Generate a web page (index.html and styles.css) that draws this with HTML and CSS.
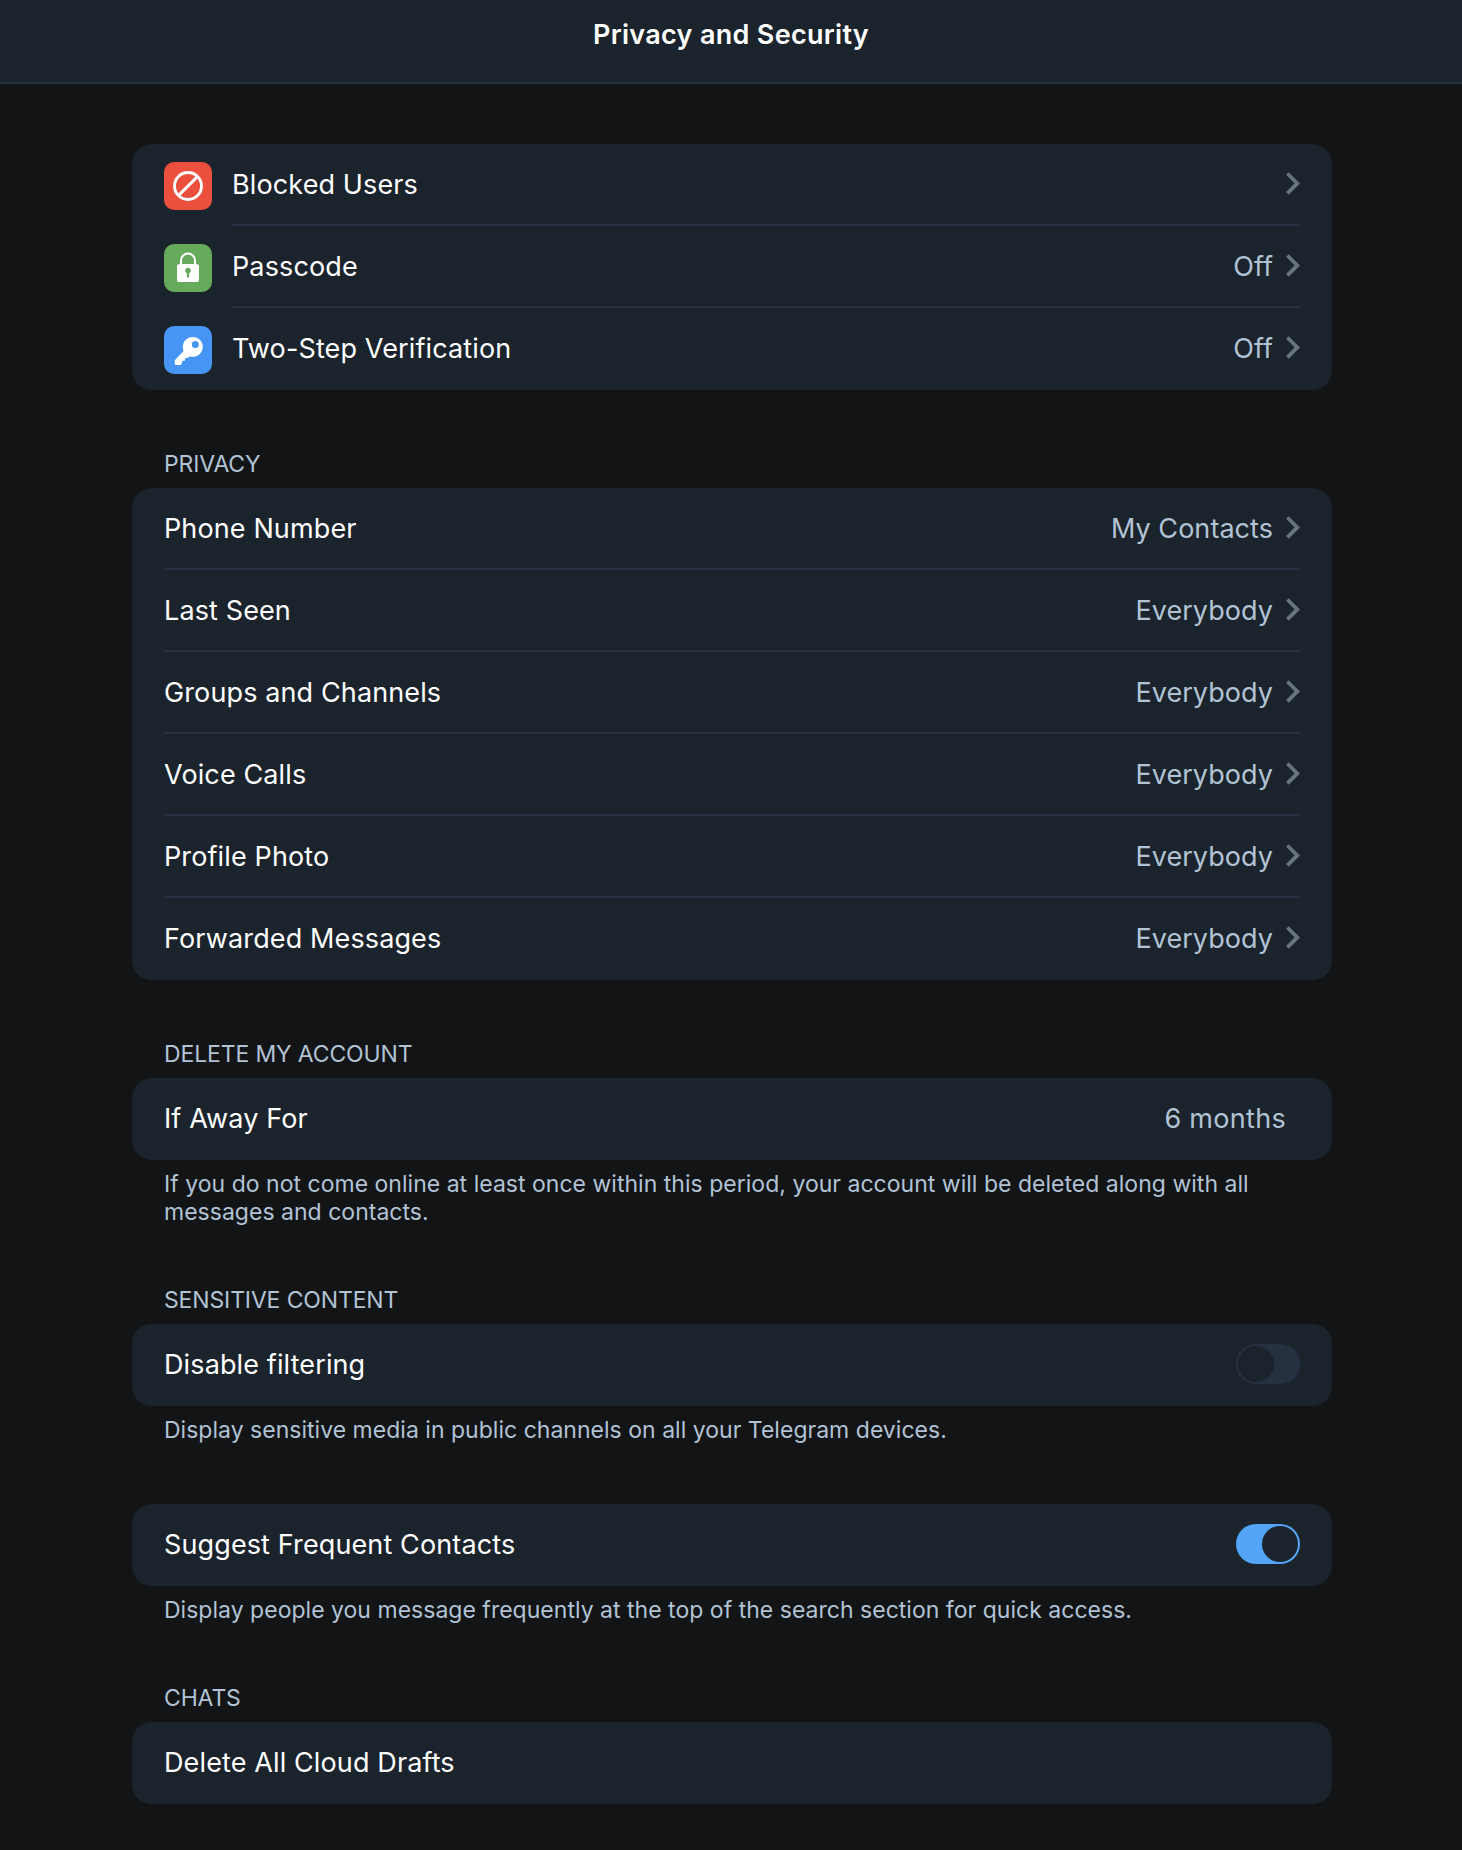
FILE: index.html
```html
<!DOCTYPE html>
<html lang="en">
<head>
<meta charset="utf-8">
<title>Privacy and Security</title>
<link rel="stylesheet" href="styles.css">
</head>
<body>
<svg class="sprite" aria-hidden="true">
  <symbol id="chevron" viewBox="0 0 14 24"><path d="M1.4 1.5 11.3 11.4 1.4 21.3" fill="none" stroke="currentColor" stroke-width="3.8"/></symbol>
</svg>
<header class="header"><h1 class="title">Privacy and Security</h1></header>
<main class="content">
  <section class="section">
    <div class="card">
      <div class="row row-icon">
        <svg class="icon icon-red" viewBox="0 0 48 48"><g fill="none" stroke="#fff" stroke-width="2.9"><circle cx="24" cy="24" r="13.5"/><path d="M14.6 33.4 33.4 14.6"/></g></svg>
        <div class="cell"><span class="name">Blocked Users</span><svg class="chevron"><use href="#chevron"/></svg></div>
      </div>
      <div class="row row-icon">
        <svg class="icon icon-green" viewBox="0 0 48 48"><path d="M17 21v-4.5a7 7 0 0 1 14 0V21" fill="none" stroke="#fff" stroke-width="2"/><rect x="13" y="20" width="22" height="18" rx="2.6" fill="#fff"/><path d="M24 23.8a2.8 2.8 0 0 1 1.1 5.4V33.6h-2.2V29.2A2.8 2.8 0 0 1 24 23.8z" fill="#66ab5c"/></svg>
        <div class="cell"><span class="name">Passcode</span><span class="value">Off</span><svg class="chevron"><use href="#chevron"/></svg></div>
      </div>
      <div class="row row-icon">
        <svg class="icon icon-blue" viewBox="0 0 48 48"><path fill="#fff" fill-rule="evenodd" d="M29 11a9.9 9.9 0 1 1-2.9 19.4L23.6 31.8 21 32.2v2.6h-2.6l-.4 2-1 2.2h-5a1.2 1.2 0 0 1-1.2-1.2v-3.6L19.6 25A9.9 9.9 0 0 1 29 11zm2.3 3.9a3.5 3.5 0 1 0 0 7 3.5 3.5 0 0 0 0-7z"/></svg>
        <div class="cell"><span class="name">Two-Step Verification</span><span class="value">Off</span><svg class="chevron"><use href="#chevron"/></svg></div>
      </div>
    </div>
  </section>

  <section class="section">
    <h2 class="label">PRIVACY</h2>
    <div class="card">
      <div class="row"><div class="cell"><span class="name">Phone Number</span><span class="value">My Contacts</span><svg class="chevron"><use href="#chevron"/></svg></div></div>
      <div class="row"><div class="cell"><span class="name">Last Seen</span><span class="value">Everybody</span><svg class="chevron"><use href="#chevron"/></svg></div></div>
      <div class="row"><div class="cell"><span class="name">Groups and Channels</span><span class="value">Everybody</span><svg class="chevron"><use href="#chevron"/></svg></div></div>
      <div class="row"><div class="cell"><span class="name">Voice Calls</span><span class="value">Everybody</span><svg class="chevron"><use href="#chevron"/></svg></div></div>
      <div class="row"><div class="cell"><span class="name">Profile Photo</span><span class="value">Everybody</span><svg class="chevron"><use href="#chevron"/></svg></div></div>
      <div class="row"><div class="cell"><span class="name">Forwarded Messages</span><span class="value">Everybody</span><svg class="chevron"><use href="#chevron"/></svg></div></div>
    </div>
  </section>

  <section class="section">
    <h2 class="label">DELETE MY ACCOUNT</h2>
    <div class="card">
      <div class="row"><div class="cell"><span class="name">If Away For</span><span class="value value-plain">6 months</span></div></div>
    </div>
    <p class="note">If you do not come online at least once within this period, your account will be deleted along with all messages and contacts.</p>
  </section>

  <section class="section">
    <h2 class="label">SENSITIVE CONTENT</h2>
    <div class="card">
      <div class="row"><div class="cell"><span class="name">Disable filtering</span><span class="switch"><span class="knob"></span></span></div></div>
    </div>
    <p class="note">Display sensitive media in public channels on all your Telegram devices.</p>
  </section>

  <section class="section">
    <div class="card">
      <div class="row"><div class="cell"><span class="name">Suggest Frequent Contacts</span><span class="switch switch-on"><span class="knob"></span></span></div></div>
    </div>
    <p class="note">Display people you message frequently at the top of the search section for quick access.</p>
  </section>

  <section class="section">
    <h2 class="label">CHATS</h2>
    <div class="card">
      <div class="row"><div class="cell"><span class="name">Delete All Cloud Drafts</span></div></div>
    </div>
  </section>
</main>
</body>
</html>
```
FILE: styles.css
```css
* { box-sizing: border-box; }

body {
  margin: 0;
  min-height: 1850px;
  background: #131415;
  color: #fff;
  font-family: Inter, "Liberation Sans", sans-serif;
  font-size: 27px;
  letter-spacing: 0.12px;
}

.sprite { display: none; }

.header {
  height: 84px;
  padding-top: 15px;
  background: #1b232c;
  border-bottom: 2px solid #253141;
  text-align: center;
}

.title {
  margin: 0;
  font-size: 27px;
  font-weight: 600;
  line-height: 40px;
  letter-spacing: 0.3px;
}

.content {
  display: flex;
  flex-direction: column;
  gap: 60px;
  width: 1200px;
  margin: 60px 130px 0 132px;
}

.card {
  background: #1b232c;
  border-radius: 20px;
}

.row {
  display: flex;
  height: 82px;
  padding: 0 32px;
}

.cell {
  display: flex;
  flex: 1;
  align-items: center;
  border-bottom: 2px solid #253141;
}

.row:last-child .cell { border-bottom-color: transparent; }

.name { flex: 1; }

.value {
  margin-right: 13px;
  color: #b1c3d5;
  letter-spacing: 0.05px;
}

.value-plain {
  margin-right: 14px;
  letter-spacing: 0.3px;
}

.chevron {
  width: 14px;
  height: 24px;
  color: #687481;
}

.icon {
  width: 48px;
  height: 48px;
  margin: 18px 20px 0 0;
  border-radius: 10px;
}

.icon-red { background: #eb4f3d; }
.icon-green { background: #66ab5c; }
.icon-blue { background: #4694f3; }

.label,
.note {
  margin: 0;
  padding: 0 32px;
  color: #b1c3d5;
  font-size: 23px;
  font-weight: 400;
  line-height: 28px;
}

.label {
  padding-bottom: 10px;
  letter-spacing: -0.14px;
}

.note {
  padding-top: 10px;
  letter-spacing: 0.02px;
}

.switch {
  display: flex;
  width: 64px;
  height: 40px;
  padding: 2px;
  border-radius: 20px;
  background: #253141;
}

.switch-on {
  justify-content: flex-end;
  background: #54a5f8;
}

.knob {
  width: 36px;
  height: 36px;
  border-radius: 50%;
  background: #1b232c;
}
```
